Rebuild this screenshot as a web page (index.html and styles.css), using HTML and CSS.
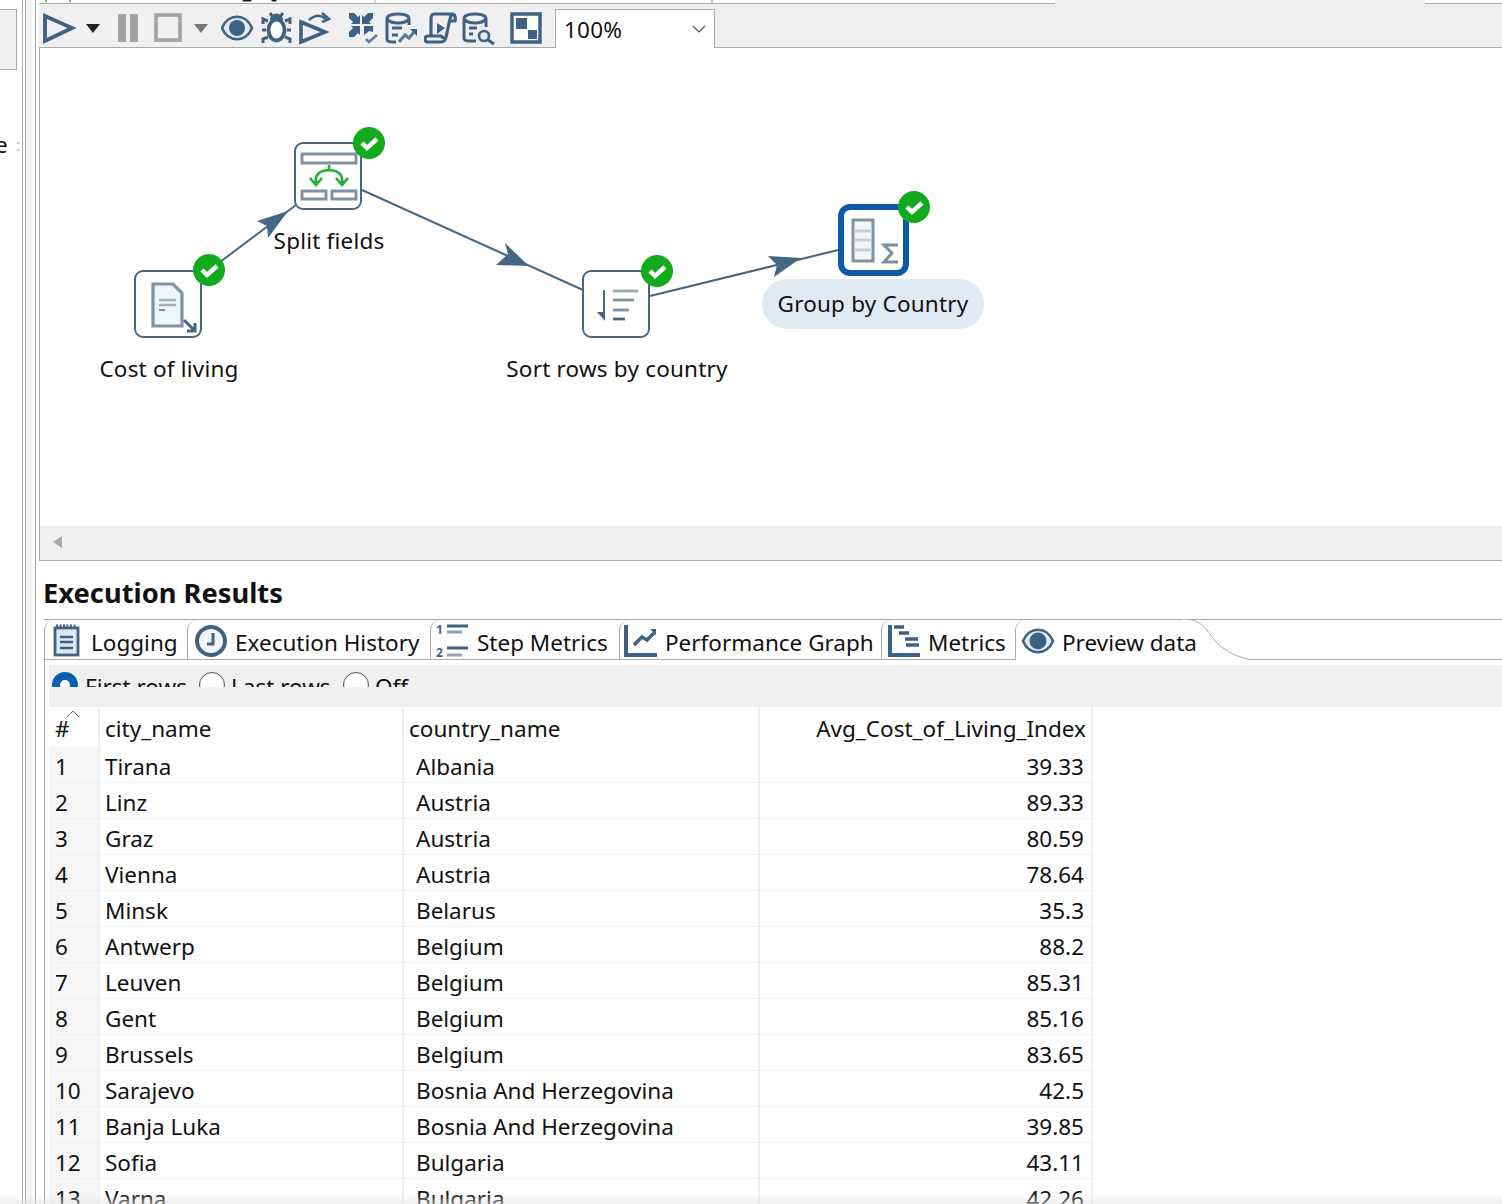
FILE: index.html
```html
<!DOCTYPE html>
<html lang="en">
<head>
<meta charset="utf-8">
<title>Execution Results</title>
<link rel="stylesheet" href="styles.css">
</head>
<body>
<div class="app">
  <aside class="side">
    <div class="side-box"></div>
    <div class="side-label"><span class="side-e">e</span><span class="side-colon">:</span></div>
  </aside>
  <div class="sash"></div>
  <main class="main">
    <div class="strip">
      <div class="strip-tab">
        <svg class="strip-bits" width="1016" height="3" viewBox="39 0 1016 3">
          <path d="M46 0v2M70 0v2" stroke="#6cc46c" stroke-width="2"/>
          <path d="M243 0v1h8v-1M272 0v1h4v-1" stroke="#222" stroke-width="1"/>
          <path d="M375 0v3M712 0v3" stroke="#aaa"/>
        </svg>
      </div>
      <div class="strip-gap"></div>
      <div class="strip-end"></div>
    </div>
    <div class="toolbar">
      <svg width="43" height="44" viewBox="43 4 43 44"><path class="ink" d="M45 16 72 28 45 41Z" stroke-width="3.8"/></svg>
      <svg width="32" height="44" viewBox="86 4 32 44"><path d="M86 24h14l-7 9z" fill="#222"/></svg>
      <svg width="36" height="44" viewBox="118 4 36 44"><path d="M118 14h8v28h-8zM130 14h8v28h-8z" fill="#a2a2a2"/></svg>
      <svg width="40" height="44" viewBox="154 4 40 44"><rect x="156" y="15" width="24" height="25" fill="none" stroke="#a2a2a2" stroke-width="3.6"/></svg>
      <svg width="27" height="44" viewBox="194 4 27 44"><path d="M194 24h14l-7 9z" fill="#777"/></svg>
      <svg width="40" height="44" viewBox="221 4 40 44"><path d="M222 28C228 13 246 13 252 28 246 43 228 43 222 28Z" fill="#e4ebf1" stroke="#3f6184" stroke-width="2.6"/><circle cx="237" cy="28" r="8" fill="#3f6184"/></svg>
      <svg width="38" height="44" viewBox="261 4 38 44"><ellipse cx="276.500" cy="30" rx="8" ry="10.500" fill="#fff" stroke="#3f6184" stroke-width="3.800"/><path d="M270 20a6.500 6.500 0 0 1 13 0z" fill="#3f6184"/><path class="ink" d="M270 13l3 4M283 13l-3 4M268 21l-5-2v5M285 21l5-2v5M266 30h-4M287 30h4M268 37l-5 2v4M285 37l5 2v4" stroke-width="3"/></svg>
      <svg width="48" height="44" viewBox="299 4 48 44"><path class="ink" d="M301 22 325 32 301 42Z" stroke-width="3.600"/><path class="ink" d="M309 20Q318 12 326 19" stroke-width="2.600"/><path class="ink" d="M322 13l7 6-7 3" stroke-width="2.600"/></svg>
      <svg width="38" height="44" viewBox="347 4 38 44"><path d="M349 13l5 0 4 4 2-2v9h-9l2-2-4-4zM373 13v5l-4 4 2 2h-9v-9l2 2 4-4zM349 37v-5l4-4-2-2h9v9l-2-2-4 4zM371 26l2 0v6l-4-1-2 2-3 2v-9z" fill="#3f6184"/><path d="M366 39l3 3 8-7" fill="none" stroke="#5f7b96" stroke-width="2.600"/></svg>
      <svg width="39" height="44" viewBox="385 4 39 44"><path class="ink" d="M387 19q0-5 11-5t11 5v6M387 19v20q0 3 6 3h3M387 19q3 4 11 4t11-4M392 28h10M392 35h6" stroke-width="3"/><path d="M399 42l6-7 4 3 6-7" fill="none" stroke="#5f7b96" stroke-width="3.200"/><path d="M410 29h7v7z" fill="#3f6184"/></svg>
      <svg width="38" height="44" viewBox="424 4 38 44"><path class="ink" d="M434 14h20q-3 0-4 5l-4 18q-1 5-5 5H428q-3 0-3-3t3-3h12q3 0 3 3M434 14q-3 0-3 5v17M450 21h5q1-3-1-7" stroke-width="3.200"/><path d="M437 23l8 5-8 6z" fill="#3f6184"/></svg>
      <svg width="48" height="44" viewBox="462 4 48 44"><path class="ink" d="M464 19q0-5 11-5t11 5v8M464 19v19q0 3 6 3h6M464 19q3 4 11 4t11-4M469 28h8M469 34h4" stroke-width="3"/><circle cx="484" cy="36" r="5" fill="#e4ebf1" stroke="#3f6184" stroke-width="2.600"/><path class="ink" d="M488 40l6 4" stroke-width="3.200"/></svg>
      <svg width="45" height="44" viewBox="510 4 45 44"><rect x="512" y="14" width="28" height="28" fill="#fff" stroke="#3f6184" stroke-width="3.500"/><path d="M516 18h11v11h-11zM528 30h9v9h-9z" fill="#3f6184"/></svg>
      <div class="combo"><span>100%</span><svg width="14" height="8" viewBox="0 0 14 8"><path d="M1 1l6 6 6-6" fill="none" stroke="#555" stroke-width="1.200"/></svg></div>
    </div>
    <div class="canvas">
      <div class="node n-cost"><div class="box"></div><div class="label">Cost of living</div></div>
      <div class="node n-split"><div class="box"></div><div class="label">Split fields</div></div>
      <div class="node n-sort"><div class="box"></div><div class="label">Sort rows by country</div></div>
      <div class="node n-group"><div class="box box-active"></div><div class="pill">Group by Country</div></div>
      <svg class="overlay" width="1462" height="478" viewBox="40 48 1462 478">
        <g stroke="#466784" stroke-width="2" fill="none">
          <path d="M220 262 296 205"/>
          <path d="M362 190 583 290"/>
          <path d="M650 296 838 250"/>
        </g>
        <g fill="#466784">
          <path d="M288 211 257 221 267 226 268 238Z"/>
          <path d="M529 266 505 243 508 254 496 265Z"/>
          <path d="M801 258 768 256 777 265 774 277Z"/>
        </g>
        <!-- Cost of living -->
        <path d="M153 284h20l9 9v33h-29z" fill="#eef5fb" stroke="#7f93a5" stroke-width="3.200"/>
        <path d="M159 300h17M159 305h17" stroke="#a3b2c0" stroke-width="2.400"/>
        <path d="M159 310h6" stroke="#7f93a5" stroke-width="2"/>
        <path d="M184 320l10 10M187 331h8v-8" fill="none" stroke="#466784" stroke-width="3"/>
        <!-- Split fields -->
        <rect x="302" y="154" width="54" height="9" fill="#fff" stroke="#7f93a5" stroke-width="3"/>
        <rect x="302" y="191" width="24" height="8" fill="#fff" stroke="#7f93a5" stroke-width="3"/>
        <rect x="332" y="191" width="24" height="8" fill="#fff" stroke="#7f93a5" stroke-width="3"/>
        <path d="M329 165v5M316 183q-2-12 13-13 15 1 13 13M310 178l6 7 6-7M336 178l6 7 6-7" fill="none" stroke="#1fae2f" stroke-width="2.600"/>
        <!-- Sort rows -->
        <path d="M604 290v26" stroke="#466784" stroke-width="2"/>
        <path d="M597 312h8v9z" fill="#466784"/>
        <path d="M613 291h25" stroke="#9aaaba" stroke-width="2.800"/>
        <path d="M613 300h21" stroke="#7f93a5" stroke-width="2.800"/>
        <path d="M613 310h16" stroke="#7f93a5" stroke-width="2.800"/>
        <path d="M613 319h12" stroke="#466784" stroke-width="2.800"/>
        <!-- Group -->
        <rect x="853" y="220" width="20" height="41" fill="#f3f6f8" stroke="#7f93a5" stroke-width="3"/>
        <path d="M854 231h18M854 240h18M854 250h18" stroke="#c3ced8" stroke-width="2.800"/>
        <path d="M898 245H884L892 253 884 262H898" fill="none" stroke="#7a8ea2" stroke-width="3"/>
        <!-- Status badges -->
        <g fill="#12ab1d">
          <circle cx="209" cy="270" r="16"/>
          <circle cx="369" cy="143" r="16"/>
          <circle cx="657" cy="271" r="16"/>
          <circle cx="914" cy="207" r="16"/>
        </g>
        <g fill="none" stroke="#fff" stroke-width="4.400">
          <path d="M202 270l5 5 10-9"/>
          <path d="M362 143l5 5 10-9"/>
          <path d="M650 271l5 5 10-9"/>
          <path d="M907 207l5 5 10-9"/>
        </g>
      </svg>
    </div>
    <div class="hscroll"><svg width="10" height="12" viewBox="0 0 10 12"><path d="M9 0v12L0 6z" fill="#a8a8a8"/></svg></div>
    <h2 class="title">Execution Results</h2>
    <div class="tabs">
      <div class="tab t1">
        <svg width="47" height="39" viewBox="44 620 47 39"><rect x="55" y="628" width="23" height="27" fill="#dfe8f0" stroke="#3f6184" stroke-width="2.800"/><path d="M56 626h21" stroke="#3f6184" stroke-width="3" stroke-dasharray="2 1.500"/><path d="M60 637h13M60 642h13M60 648h13" stroke="#3f6184" stroke-width="2.400"/></svg>
        <span>Logging</span>
      </div>
      <div class="tab t2">
        <svg width="48" height="39" viewBox="187 620 48 39"><circle cx="211" cy="641" r="14" fill="#f3f6f8" stroke="#3f6184" stroke-width="4"/><path d="M213 633v11h-6" fill="none" stroke="#3f6184" stroke-width="3"/></svg>
        <span>Execution History</span>
      </div>
      <div class="tab t3">
        <svg width="47" height="39" viewBox="430 620 47 39"><text class="ico-num" x="436" y="634">1</text><text class="ico-num" x="436" y="657">2</text><path d="M447 626h21M447 648h21" stroke="#3f6184" stroke-width="3"/><path d="M447 632h15M447 655h15" stroke="#8fa3b5" stroke-width="3"/></svg>
        <span>Step Metrics</span>
      </div>
      <div class="tab t4">
        <svg width="46" height="39" viewBox="619 620 46 39"><path d="M626 625v30h31" fill="none" stroke="#3f6184" stroke-width="4"/><path d="M634 645l8-8 5 3 7-7" fill="none" stroke="#3f6184" stroke-width="3.400"/><path d="M650 629h6v6z" fill="#3f6184"/></svg>
        <span>Performance Graph</span>
      </div>
      <div class="tab t5">
        <svg width="47" height="39" viewBox="881 620 47 39"><path d="M890 625v30h30" fill="none" stroke="#3f6184" stroke-width="4"/><path d="M894 627h10M899 633h10M905 639h13M906 645h13" stroke="#3f6184" stroke-width="3.400"/></svg>
        <span>Metrics</span>
      </div>
      <div class="tab tab-active t6">
        <svg width="47" height="39" viewBox="1015 620 47 39"><path d="M1023 641C1029 626 1047 626 1053 641 1047 656 1029 656 1023 641Z" fill="#e4ebf1" stroke="#3f6184" stroke-width="2.600"/><circle cx="1038" cy="641" r="8.500" fill="#3f6184"/></svg>
        <span>Preview data</span>
        <svg class="tab-curve" width="66" height="42" viewBox="0 0 66 42"><path d="M0 0C10 0 18 2 25 11 30 18 36 26 41 29 48 34 56 38 66 40V42H0Z" fill="#fff"/><path d="M0 0C10 0 18 2 25 11 30 18 36 26 41 29 48 34 56 38 66 40" fill="none" stroke="#aaa"/></svg>
      </div>
    </div>
    <div class="folder">
      <div class="radios">
        <div class="radio-clip">
          <span class="radio radio-on"></span><span class="radio-text">First rows</span>
          <span class="radio"></span><span class="radio-text">Last rows</span>
          <span class="radio"></span><span class="radio-text">Off</span>
        </div>
      </div>
      <table class="grid">
        <colgroup><col class="c-num"><col class="c-city"><col class="c-country"><col class="c-avg"></colgroup>
        <thead>
          <tr><th class="num">#<svg class="sort-mark" width="14" height="8" viewBox="0 0 14 8"><path d="M1 7l6-6 6 6" fill="none" stroke="#666"/></svg></th><th>city_name</th><th>country_name</th><th class="val">Avg_Cost_of_Living_Index</th></tr>
        </thead>
        <tbody>
          <tr><td class="num">1</td><td>Tirana</td><td class="country">Albania</td><td class="val">39.33</td></tr>
          <tr><td class="num">2</td><td>Linz</td><td class="country">Austria</td><td class="val">89.33</td></tr>
          <tr><td class="num">3</td><td>Graz</td><td class="country">Austria</td><td class="val">80.59</td></tr>
          <tr><td class="num">4</td><td>Vienna</td><td class="country">Austria</td><td class="val">78.64</td></tr>
          <tr><td class="num">5</td><td>Minsk</td><td class="country">Belarus</td><td class="val">35.3</td></tr>
          <tr><td class="num">6</td><td>Antwerp</td><td class="country">Belgium</td><td class="val">88.2</td></tr>
          <tr><td class="num">7</td><td>Leuven</td><td class="country">Belgium</td><td class="val">85.31</td></tr>
          <tr><td class="num">8</td><td>Gent</td><td class="country">Belgium</td><td class="val">85.16</td></tr>
          <tr><td class="num">9</td><td>Brussels</td><td class="country">Belgium</td><td class="val">83.65</td></tr>
          <tr><td class="num">10</td><td>Sarajevo</td><td class="country">Bosnia And Herzegovina</td><td class="val">42.5</td></tr>
          <tr><td class="num">11</td><td>Banja Luka</td><td class="country">Bosnia And Herzegovina</td><td class="val">39.85</td></tr>
          <tr><td class="num">12</td><td>Sofia</td><td class="country">Bulgaria</td><td class="val">43.11</td></tr>
          <tr><td class="num">13</td><td>Varna</td><td class="country">Bulgaria</td><td class="val">42.26</td></tr>
        </tbody>
      </table>
    </div>
  </main>
</div>
<div class="bottom-fade"></div>
</body>
</html>
```

FILE: styles.css
```css
* { box-sizing: border-box; }
html, body {
  margin: 0;
  height: 1204px;
  overflow: hidden;
  background: #fff;
  color: #111;
  font-family: "Noto Sans", "Open Sans", sans-serif;
  font-size: 22.5px;
}
svg { display: block; flex: none; }
.ink { fill: none; stroke: #3f6184; }

.app { display: flex; height: 1204px; }

/* left pane fragment and sash */
.side { width: 22px; flex: none; overflow: hidden; }
.side-box {
  width: 17px;
  height: 61px;
  margin-top: 9px;
  background: #f0f0f0;
  border: 1px solid #aaa;
  border-left: 0;
}
.side-label { display: flex; height: 30px; margin-top: 60px; line-height: 30px; }
.side-e { margin-left: -5px; width: 21px; }
.side-colon { color: #c9b99a; font-size: 16px; }
.sash {
  width: 14px;
  flex: none;
  background: #f3f3f3;
  border-left: 1px solid #aaa;
  border-right: 1px solid #aaa;
  box-shadow: inset 2px 0 0 #fff, inset 3px 0 0 #aaa, inset -3px 0 0 #fff;
}

.main { flex: 1; min-width: 0; padding-left: 3px; background: #fff; }

/* top strip */
.strip { display: flex; height: 4px; border-bottom: 1px solid #aaa; }
.strip-tab { width: 1016px; background: #fff; }
.strip-gap { width: 370px; background: #f0f0f0; margin-bottom: -1px; }
.strip-end { flex: 1; background: #fff; }

/* toolbar */
.toolbar {
  display: flex;
  align-items: flex-start;
  height: 44px;
  padding-left: 4px;
  background: #f0f0f0;
  border-bottom: 1px solid #aaa;
}
.combo {
  display: flex;
  align-items: center;
  justify-content: space-between;
  width: 160px;
  height: 39px;
  margin-top: 5px;
  padding: 0 8px 0 8px;
  background: #fff;
  border: 1px solid #aaa;
  border-bottom: 0;
  color: #111;
  letter-spacing: .2px;
}

/* canvas */
.canvas {
  position: relative;
  height: 478px;
  background: #fff;
  border-left: 1px solid #aaa;
}
.overlay { position: absolute; left: 0; top: 0; }
.node { position: absolute; letter-spacing: .2px; }
.box {
  position: absolute;
  left: 0;
  top: 0;
  width: 68px;
  height: 68px;
  background: #fff;
  border: 2px solid #466784;
  border-radius: 9px;
}
.box-active {
  width: 71px;
  height: 72px;
  border: 6px solid #0b5aa5;
  border-radius: 12px;
}
.label {
  position: absolute;
  top: 82px;
  left: 35px;
  transform: translateX(-50%);
  white-space: nowrap;
  line-height: 34px;
  z-index: 2;
}
.n-cost { left: 94px; top: 222px; }
.n-split { left: 254px; top: 94px; }
.n-sort { left: 542px; top: 222px; }
.n-group { left: 798px; top: 156px; }
.pill {
  position: absolute;
  left: -76px;
  top: 75px;
  width: 222px;
  height: 50px;
  border-radius: 25px;
  background: #e1eaf3;
  line-height: 50px;
  text-align: center;
  white-space: nowrap;
}

/* scroll bar */
.hscroll {
  display: flex;
  align-items: center;
  height: 35px;
  padding: 0 0 2px 13px;
  background: #f0f0f0;
  border-left: 1px solid #aaa;
  border-bottom: 1px solid #aaa;
}

.title {
  margin: 0 0 0 4px;
  height: 58px;
  padding-top: 12px;
  font-size: 27.3px;
  font-weight: 700;
  line-height: 40px;
  color: #111;
}

/* tabs */
.tabs {
  display: flex;
  height: 41px;
  margin-left: 5px;
  border-top: 1px solid #aaa;
  border-bottom: 1px solid #aaa;
}
.tab {
  display: flex;
  align-items: center;
  height: 39px;
  position: relative;
  white-space: nowrap;
  border-left: 1px solid #aaa;
  border-top-left-radius: 10px;
}
.tab svg { margin-left: -1px; }
.tab span { padding-top: 5px; }
.t1 { width: 143px; }
.t2 { width: 243px; }
.t3 { width: 189px; }
.t4 { width: 262px; }
.t5 { width: 134px; }
.t6 { width: 167px; height: 40px; padding-bottom: 1px; background: #fff; margin-bottom: -1px; }
.tab-active { z-index: 1; }
.tab-active .tab-curve { position: absolute; left: 166px; top: -1px; margin: 0; z-index: -1; }
.ico-num { font-size: 12px; font-weight: 700; fill: #3f6184; }

/* results */
.folder { margin-left: 5px; padding: 5px 0 0 4px; border-left: 1px solid #aaa; }
.radios { height: 42px; background: #f0f0f0; }
.radio-clip {
  display: flex;
  align-items: flex-start;
  height: 22px;
  overflow: hidden;
  padding: 7px 0 0 3px;
}
.radio {
  flex: none;
  width: 26px;
  height: 26px;
  border-radius: 50%;
  border: 1px solid #555;
  background: #fff;
}
.radio-on { border: 8px solid #0b5fb0; }
.radio-text { flex: none; line-height: 30px; margin-left: 6px; }
.radio-text:nth-of-type(2) { width: 114px; margin-left: 7px; }
.radio-text:nth-of-type(4) { width: 112px; }

.grid {
  border-collapse: separate;
  border-spacing: 0;
  table-layout: fixed;
  width: 1044px;
}
.c-num { width: 51px; }
.c-city { width: 304px; }
.c-country { width: 356px; }
.c-avg { width: 333px; }
.grid th, .grid td {
  padding: 0 0 0 5px;
  text-align: left;
  font-weight: 400;
  white-space: nowrap;
  border-right: 2px solid #edf1f6;
}
.grid th { height: 40px; padding-top: 4px; line-height: 36px; }
.grid td { height: 36px; padding-top: 4px; line-height: 31px; border-bottom: 1px solid #edf1f6; }
.grid .num { padding-left: 6px; }
.grid th.num { position: relative; }
.grid td.num { background: #f6f6f6; }
.sort-mark { position: absolute; left: 17px; top: 3px; }
.grid td.country { padding-left: 12px; }
.grid th.val { text-align: right; padding-right: 5px; }
.grid td.val { text-align: right; padding-right: 7px; }

.bottom-fade {
  position: absolute;
  left: 0;
  right: 0;
  top: 1194px;
  height: 10px;
  background: linear-gradient(to bottom, rgba(240,240,240,0), rgba(225,225,225,.55));
  pointer-events: none;
}
```
